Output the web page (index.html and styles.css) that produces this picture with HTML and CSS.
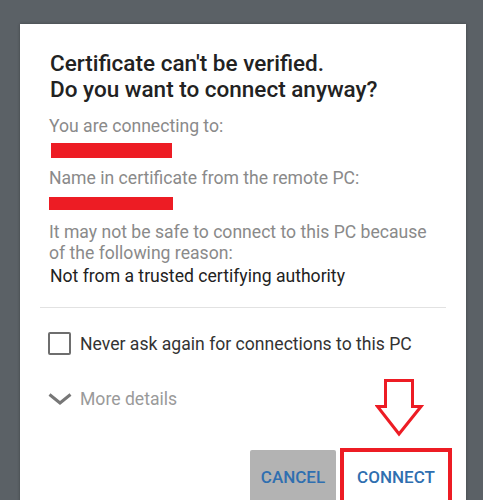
FILE: index.html
```html
<!DOCTYPE html>
<html lang="en">
<head>
  <meta charset="UTF-8" />
  <meta name="viewport" content="width=device-width, initial-scale=1.0" />
  <title>Certificate can't be verified</title>
  <link rel="stylesheet" href="styles.css">
</head>
<body>
  <div class="dialog">
    <div class="content">
      <h1 class="title">Certificate can't be verified.<br>Do you want to connect anyway?</h1>
      <p class="label">You are connecting to:</p>
      <div class="redact redact-1"></div>
      <p class="label label-name">Name in certificate from the remote PC:</p>
      <div class="redact redact-2"></div>
      <p class="label label-reason">It may not be safe to connect to this PC because of the following reason:</p>
      <p class="reason">Not from a trusted certifying authority</p>
    </div>
    <hr class="divider" />
    <label class="check-row">
      <span class="checkbox"></span>
      <span>Never ask again for connections to this PC</span>
    </label>
    <div class="details-row">
      <svg class="chevron" width="24" height="12" viewBox="0 0 24 12">
        <polyline points="1.5,1.5 12,10 22.5,1.5" fill="none" stroke="#777" stroke-width="3" />
      </svg>
      <span>More details</span>
    </div>
    <div class="actions">
      <svg class="hint-arrow" width="49" height="59" viewBox="0 0 49 59">
        <polygon points="10.5,1.5 37.5,1.5 37.5,27.5 46,27.5 24,55 2.5,27.5 10.5,27.5" fill="none" stroke="#ed1c24" stroke-width="3" />
      </svg>
      <button class="btn btn-cancel">CANCEL</button>
      <button class="btn btn-connect">CONNECT</button>
    </div>
  </div>
</body>
</html>
```

FILE: styles.css
```css
body {
  margin: 0;
  padding: 0;
  background: #5b6166;
  font-family: Roboto, "Noto Sans", sans-serif;
  height: 500px;
  overflow: hidden;
}
.dialog {
  margin: 24px 0 0 20px;
  width: 446px;
  height: 500px;
  background: #fff;
  box-shadow: 0 0 3px rgba(0, 0, 0, 0.3);
}
.content {
  padding: 26px 30px 0 30px;
}
.title {
  margin: 0;
  font-size: 22.5px;
  line-height: 26px;
  font-weight: 500;
  color: #222;
}
.label {
  margin: 14px 0 0 -1px;
  font-size: 17.6px;
  line-height: 21px;
  color: #8a8a8a;
}
.label-name {
  margin-top: 10px;
}
.label-reason {
  margin-top: 12px;
}
.reason {
  margin: 2px 0 0;
  font-size: 17.6px;
  line-height: 21px;
  color: #222;
}
.redact {
  background: #ed1c24;
}
.redact-1 {
  margin: 6px 0 0 1px;
  width: 121px;
  height: 15px;
}
.redact-2 {
  margin: 8px 0 0 -1px;
  width: 124px;
  height: 13px;
}
.divider {
  margin: 20px 20px 0;
  border: 0;
  border-top: 1px solid #e2e2e2;
}
.check-row,
.details-row {
  display: flex;
  align-items: center;
  gap: 9px;
  margin-left: 28px;
  font-size: 17.6px;
  line-height: 22px;
}
.check-row {
  margin-top: 24px;
  color: #333;
}
.checkbox {
  width: 19px;
  height: 19px;
  border: 2px solid #6e6e6e;
  border-radius: 2px;
}
.details-row {
  margin-top: 33px;
  color: #9a9a9a;
  gap: 8px;
}
.actions {
  position: relative;
  display: flex;
  justify-content: flex-end;
  align-items: flex-start;
  gap: 4px;
  margin: 38px 14px 0 0;
}
.btn {
  box-sizing: border-box;
  display: block;
  font-family: Roboto, "Noto Sans", sans-serif;
  font-size: 17px;
  font-weight: 500;
  line-height: 22px;
  color: #2f6fb0;
  text-align: center;
  background: none;
  border: 0;
}
.btn-cancel {
  margin-top: 2px;
  width: 86px;
  padding: 16px 0 18px;
  background: #b3b3b3;
  border-radius: 2px 2px 0 0;
}
.btn-connect {
  width: 112px;
  padding: 14px 0 20px;
  border: 4px solid #ed1c24;
}
.hint-arrow {
  position: absolute;
  left: 355px;
  top: -69px;
}
```
